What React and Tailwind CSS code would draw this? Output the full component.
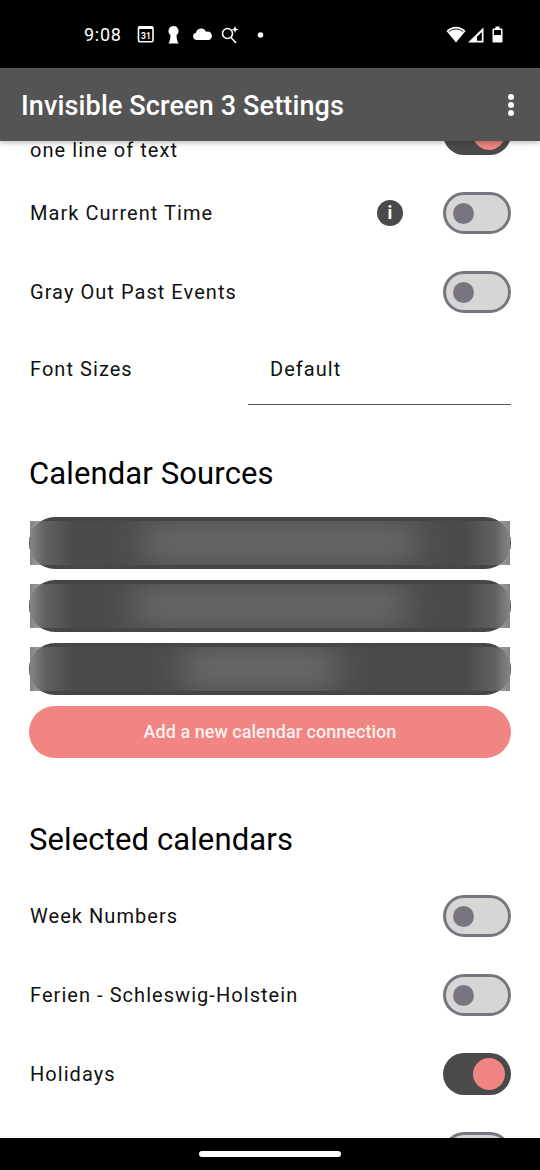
import React from "react";

function Toggle({ on }) {
  if (on) {
    return (
      <div className="flex h-[42px] w-[68px] shrink-0 items-center justify-end rounded-full bg-[#4a4a4a] pr-[6px]">
        <div className="h-[32px] w-[32px] rounded-full bg-[#f08583]" />
      </div>
    );
  }
  return (
    <div className="flex h-[42px] w-[68px] shrink-0 items-center rounded-full border-[3px] border-[#79747e] bg-[#d6d6d6] pl-[7px]">
      <div className="h-[21px] w-[21px] rounded-full bg-[#79747e]" />
    </div>
  );
}

function Row({ label, on, children }) {
  return (
    <div className="flex h-[42px] items-center justify-between">
      <span className="pl-[1px] text-[20px] tracking-[1.05px] text-[#111111]">{label}</span>
      <div className="flex items-center gap-[40px]">
        {children}
        <Toggle on={on} />
      </div>
    </div>
  );
}

function BlurredSource({ glow }) {
  return (
    <div className="relative h-[52px] rounded-[26px] border-y-[4px] border-y-[#464646] bg-[#4b4b4b]">
      <div className="absolute inset-0 overflow-hidden">
        <div className={glow} />
      </div>
      <div className="absolute bottom-0 left-[1px] top-0 w-[44px] bg-gradient-to-r from-[#858585] via-[#70707099] via-35% to-[#70707000]" />
      <div className="absolute bottom-0 right-[1px] top-0 w-[44px] bg-gradient-to-l from-[#858585] via-[#70707099] via-35% to-[#70707000]" />
    </div>
  );
}

function StatusIcons() {
  return (
    <svg width="190" height="24" viewBox="0 0 190 24" fill="white" className="ml-[15px] mt-[1px]">
      <rect x="1.500" y="3.800" width="14.500" height="15" rx="1.500" fill="none" stroke="white" strokeWidth="1.600" />
      <rect x="1" y="3.500" width="15" height="2.500" fill="white" />
      <text x="4" y="16" fontSize="8.500" fontWeight="700" fontFamily="Roboto, sans-serif" fill="white">31</text>
      <path d="M36.500 3a5 5 0 0 1 3 9c0 3 .8 6.500 2 8.500h-10c1.200-2 2-5.500 2-8.500a5 5 0 0 1 3-9z" />
      <path d="M60.500 17a3.700 3.700 0 0 1-.5-7.300 5.300 5.300 0 0 1 10-1 4.200 4.200 0 0 1 3 8.300z" transform="translate(-1 0)" />
      <circle cx="90.500" cy="10.500" r="5" fill="none" stroke="white" strokeWidth="1.600" />
      <path d="M94 14.500l5 5.500" stroke="white" strokeWidth="1.600" fill="none" />
      <path d="M98 3l1 2.500 2.500 1-2.500 1-1 2.500-1-2.500-2.500-1 2.500-1z" />
      <circle cx="123.500" cy="12" r="2.800" />
    </svg>
  );
}

function RightIcons() {
  return (
    <svg width="60" height="24" viewBox="0 0 60 24" fill="white">
      <path d="M10 20.500L0.500 9C3 6.500 6 4.800 10 4.800s7 1.700 9.500 4.200z" />
      <path d="M2.900 9.600C5 8 7.300 7 10 7s5 1 7.100 2.600" fill="none" stroke="black" strokeWidth="0.900" />
      <path d="M37.500 5.500V20.500H22zM35.800 10L31 14.800V18.800H35.800z" fillRule="evenodd" />
      <path d="M47.500 6.500h2V4.500h4v2h2a1 1 0 0 1 1 1v12a1 1 0 0 1-1 1h-8a1 1 0 0 1-1-1v-12a1 1 0 0 1 1-1zM48 8v5h7V8z" fillRule="evenodd" />
    </svg>
  );
}

export default function App() {
  return (
    <div className="flex h-[1170px] w-[540px] flex-col overflow-hidden bg-white font-['Roboto',sans-serif]">
      <div className="flex h-[68px] shrink-0 items-center justify-between bg-black pl-[84px] pr-[34px]">
        <div className="flex items-center">
          <span className="pt-[1px] text-[18px] tracking-[0.7px] text-white">9:08</span>
          <StatusIcons />
        </div>
        <RightIcons />
      </div>

      <div className="relative z-10 flex h-[73px] shrink-0 items-center justify-between bg-[#545454] pl-[21px] pr-[26px] shadow-[0_2px_5px_rgba(0,0,0,0.25)]">
        <span className="pt-[3px] text-[27px] font-medium tracking-[0.14px] text-white">Invisible Screen 3 Settings</span>
        <div className="flex flex-col gap-[2px]">
          <div className="h-[6px] w-[6px] rounded-full bg-white" />
          <div className="h-[6px] w-[6px] rounded-full bg-white" />
          <div className="h-[6px] w-[6px] rounded-full bg-white" />
        </div>
      </div>

      <div className="min-h-0 flex-1 overflow-hidden">
        <div className="-mt-[28px] pl-[29px] pr-[29px]">
          <div className="flex flex-col gap-[37px]">
            <div className="flex h-[42px] items-end justify-between">
              <span className="-mb-[9px] pl-[1px] text-[20px] leading-[28px] tracking-[1.05px] text-[#111111]">one line of text</span>
              <Toggle on />
            </div>
            <Row label="Mark Current Time">
              <div className="flex h-[26px] w-[26px] items-center justify-center rounded-full bg-[#4a4a4a] text-[18px] font-bold leading-none text-white">i</div>
            </Row>
            <Row label="Gray Out Past Events" />
          </div>

          <div className="mt-[20px] flex h-[72px] items-center">
            <span className="w-[219px] pl-[1px] text-[20px] tracking-[1.05px] text-[#111111]">Font Sizes</span>
            <div className="flex h-[72px] flex-1 items-center border-b-[1.5px] border-[#555555] pl-[22px] text-[20px] tracking-[1.05px] text-[#111111]">Default</div>
          </div>

          <h2 className="mt-[49px] text-[31px] leading-[40px] tracking-[0.12px] text-black">Calendar Sources</h2>

          <div className="mt-[23px] flex flex-col gap-[11px]">
            <BlurredSource glow="absolute bottom-0 left-[110px] right-[90px] top-0 rounded-full bg-[#686868] blur-[16px]" />
            <BlurredSource glow="absolute bottom-0 left-[100px] right-[100px] top-0 rounded-full bg-[#686868] blur-[16px]" />
            <BlurredSource glow="absolute bottom-0 left-[150px] right-[170px] top-0 rounded-full bg-[#6a6a6a] blur-[16px]" />
            <div className="flex h-[52px] items-center justify-center rounded-full bg-[#f08583] pb-[2px] text-[18px] font-medium tracking-[0.03px] text-[#fdf0ef]">Add a new calendar connection</div>
          </div>

          <h2 className="mt-[62px] text-[31px] leading-[40px] tracking-[0.12px] text-black">Selected calendars</h2>

          <div className="mt-[35px] flex flex-col gap-[37px]">
            <Row label="Week Numbers" />
            <Row label="Ferien - Schleswig-Holstein" />
            <Row label="Holidays" on />
            <Row label="" />
          </div>
        </div>
      </div>

      <div className="relative z-10 flex h-[32px] shrink-0 items-center justify-center bg-black">
        <div className="h-[6px] w-[142px] rounded-full bg-white" />
      </div>
    </div>
  );
}
